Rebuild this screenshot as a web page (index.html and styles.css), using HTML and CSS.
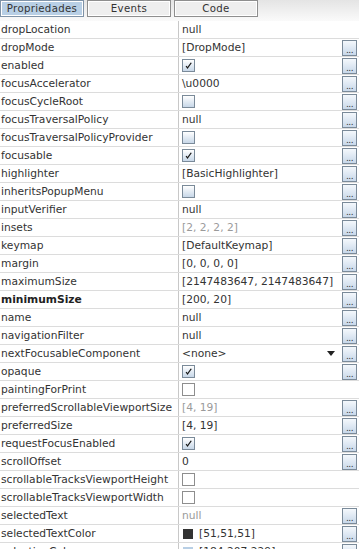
FILE: index.html
```html
<!DOCTYPE html>
<html lang="pt">
<head>
  <meta charset="UTF-8" />
  <title>Propriedades</title>
  <link rel="stylesheet" href="styles.css">
</head>
<body>
  <div class="tabs">
    <div class="tab active">Propriedades</div>
    <div class="tab">Events</div>
    <div class="tab">Code</div>
  </div>

  <div class="sheet" id="sheet"></div>

  <script>
    // tipo: t = texto, g = texto cinza, c = checkbox, u = checkbox desativado, d = combo, k = cor
    const props = [
      ["dropLocation", "t", "null", false],
      ["dropMode", "t", "[DropMode]", true],
      ["enabled", "c", true, true],
      ["focusAccelerator", "t", "\\u0000", true],
      ["focusCycleRoot", "c", false, true],
      ["focusTraversalPolicy", "t", "null", true],
      ["focusTraversalPolicyProvider", "c", false, true],
      ["focusable", "c", true, true],
      ["highlighter", "t", "[BasicHighlighter]", true],
      ["inheritsPopupMenu", "c", false, true],
      ["inputVerifier", "t", "null", true],
      ["insets", "g", "[2, 2, 2, 2]", true],
      ["keymap", "t", "[DefaultKeymap]", true],
      ["margin", "t", "[0, 0, 0, 0]", true],
      ["maximumSize", "t", "[2147483647, 2147483647]", true],
      ["minimumSize", "t", "[200, 20]", true, "bold"],
      ["name", "t", "null", true],
      ["navigationFilter", "t", "null", true],
      ["nextFocusableComponent", "d", "<none>", true],
      ["opaque", "c", true, true],
      ["paintingForPrint", "u", false, false],
      ["preferredScrollableViewportSize", "g", "[4, 19]", true],
      ["preferredSize", "t", "[4, 19]", true],
      ["requestFocusEnabled", "c", true, true],
      ["scrollOffset", "t", "0", true],
      ["scrollableTracksViewportHeight", "u", false, false],
      ["scrollableTracksViewportWidth", "u", false, false],
      ["selectedText", "g", "null", true],
      ["selectedTextColor", "k", "[51,51,51]", true, "", "#333333"],
      ["selectionColor", "k", "[184,207,229]", true, "", "#b8cfe5"]
    ];

    const tick = '<svg viewBox="0 0 12 12" width="12" height="12"><path d="M2.8 6.4 L4.9 9.2 L9.6 2.8 L8.4 2.2 L4.9 7.2 L3.9 5.6 Z" fill="#1a1a1a"/></svg>';

    const sheet = document.getElementById("sheet");
    props.forEach(p => {
      const row = document.createElement("div");
      row.className = "row";

      const name = document.createElement("div");
      name.className = "name" + (p[4] ? " " + p[4] : "");
      name.textContent = p[0];

      const value = document.createElement("div");
      value.className = "value";

      const main = document.createElement("div");
      main.className = "main";
      if (p[1] === "t" || p[1] === "g") {
        main.textContent = p[2];
        if (p[1] === "g") main.classList.add("gray");
      } else if (p[1] === "c" || p[1] === "u") {
        main.innerHTML = '<span class="check' + (p[1] === "u" ? " off" : "") + '">' + (p[2] ? tick : "") + '</span>';
      } else if (p[1] === "d") {
        main.innerHTML = '<span class="combo-text"></span><span class="arrow"></span>';
        main.querySelector(".combo-text").textContent = p[2];
        main.classList.add("combo");
      } else if (p[1] === "k") {
        main.innerHTML = '<span class="swatch" style="background:' + p[5] + '"></span><span>' + p[2] + '</span>';
      }
      value.appendChild(main);

      if (p[3]) {
        const btn = document.createElement("div");
        btn.className = "dots";
        btn.textContent = "...";
        value.appendChild(btn);
      }

      row.appendChild(name);
      row.appendChild(value);
      sheet.appendChild(row);
    });
  </script>
</body>
</html>
```

FILE: styles.css
```css
body {
  margin: 0;
  background: #fff;
  font-family: "DejaVu Sans", sans-serif;
  font-size: 10.7px;
  color: #333;
  overflow: hidden;
}
.tabs {
  display: flex;
  gap: 2px;
  height: 21px;
  background: linear-gradient(to bottom, #e4e4e4, #fafafa);
}
.tab {
  width: 82px;
  height: 15px;
  border: 1px solid #8e8e8e;
  box-shadow: inset 0 0 0 1px #fff;
  background: #eeeeee;
  text-align: center;
  line-height: 15px;
  font-size: 10.2px;
  letter-spacing: 0.3px;
  color: #333;
}
.tab.active {
  background: #b8cfe5;
  border-color: #7f93a8;
}
.tab + .tab {
  margin-left: 1px;
}
.sheet {
  display: flex;
  flex-direction: column;
}
.row {
  display: flex;
  height: 17px;
  border-bottom: 1px solid #dcdcdc;
}
.name {
  width: 177px;
  padding-left: 1px;
  border-right: 1px solid #c8c8c8;
  line-height: 17px;
  white-space: nowrap;
  overflow: hidden;
}
.name.bold {
  font-weight: bold;
  color: #222;
}
.value {
  flex: 1;
  display: flex;
  align-items: center;
  padding-left: 3px;
  padding-right: 2px;
}
.main {
  flex: 1;
  display: flex;
  align-items: center;
  gap: 6px;
  line-height: 17px;
  white-space: nowrap;
}
.gray {
  color: #9a9a9a;
}
.combo {
  justify-content: space-between;
  padding-right: 7px;
}
.arrow {
  width: 0;
  height: 0;
  border-left: 4px solid transparent;
  border-right: 4px solid transparent;
  border-top: 5px solid #222;
}
.check {
  width: 11px;
  height: 11px;
  border: 1px solid #7a8a99;
  background: linear-gradient(to bottom, #ffffff, #c7d7e8);
  display: flex;
  align-items: center;
  justify-content: center;
}
.check svg {
  display: block;
}
.check.off {
  background: #fff;
  border-color: #8e8e8e;
}
.swatch {
  width: 10px;
  height: 10px;
  margin-left: 1px;
}
.dots {
  width: 13px;
  height: 14px;
  border: 1px solid #7a8a99;
  background: linear-gradient(to bottom, #f4f8fc, #c8d8ea);
  font-size: 9px;
  line-height: 18px;
  text-align: center;
  color: #333;
  overflow: hidden;
  letter-spacing: -0.5px;
}
```
